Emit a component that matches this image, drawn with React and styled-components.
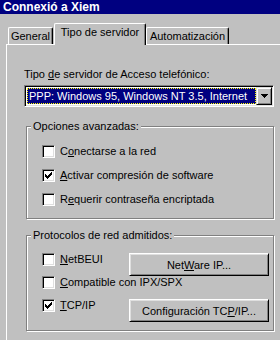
import React from 'react';
import styled, { createGlobalStyle } from 'styled-components';

const GlobalStyle = createGlobalStyle`
  html, body {
    margin: 0;
    padding: 0;
    background: #c0c0c0;
  }
  body {
    font-family: "Liberation Sans", Arial, sans-serif;
    font-size: 11px;
    color: #000;
  }
  * {
    box-sizing: border-box;
  }
`;

const Window = styled.div`
  width: 280px;
  height: 340px;
  overflow: hidden;
  background: #c0c0c0;
`;

const TitleBar = styled.div`
  height: 14px;
  padding-left: 3px;
  background: #000080;
  color: #fff;
  font-weight: bold;
  font-size: 12px;
  line-height: 14px;
  white-space: nowrap;
`;

const Body = styled.div`
  padding: 9px 0 0 6px;
`;

const TabStrip = styled.div`
  display: flex;
  align-items: flex-end;
  height: 21px;
  padding-left: 2px;
`;

const Tab = styled.div`
  position: relative;
  z-index: ${(p) => (p.$active ? 2 : 1)};
  width: ${(p) => p.$w}px;
  height: ${(p) => (p.$active ? 22 : 17)}px;
  margin-left: ${(p) => p.$ml || 0}px;
  margin-bottom: ${(p) => (p.$active ? -1 : 0)}px;
  padding-top: 2px;
  background: #c0c0c0;
  border-top: 1px solid #fff;
  border-left: 1px solid #fff;
  border-right: 1px solid #000;
  border-radius: 2px 2px 0 0;
  box-shadow: inset -1px 0 0 #808080;
  line-height: 13px;
  text-align: center;
  white-space: nowrap;
`;

const Panel = styled.div`
  width: 300px;
  height: 320px;
  padding: 23px 0 0 17px;
  border-top: 1px solid #fff;
  border-left: 1px solid #fff;
`;

const Content = styled.div`
  width: 250px;
`;

const Label = styled.div`
  line-height: 13px;
  margin-bottom: 4px;
  white-space: nowrap;
`;

const Key = styled.u`
  text-underline-offset: 1px;
`;

const Combo = styled.div`
  display: flex;
  height: 22px;
  padding: 2px;
  background: #fff;
  border: 1px solid;
  border-color: #808080 #fff #fff #808080;
  box-shadow: inset 1px 1px 0 #000, inset -1px -1px 0 #dfdfdf;
`;

const Selected = styled.div`
  flex: 1;
  min-width: 0;
  padding-left: 1px;
  background: #000080;
  color: #fff;
  border: 1px dotted #ffff00;
  line-height: 14px;
  white-space: nowrap;
  overflow: hidden;
`;

const ArrowButton = styled.div`
  flex: none;
  width: 16px;
  margin: -1px -1px -1px 0;
  display: flex;
  align-items: center;
  justify-content: center;
  background: #c0c0c0;
  border: 1px solid;
  border-color: #dfdfdf #000 #000 #dfdfdf;
  box-shadow: inset 1px 1px 0 #fff, inset -1px -1px 0 #808080;

  svg {
    display: block;
  }
`;

const Group = styled.fieldset`
  margin: ${(p) => p.$top}px 0 0 2px;
  padding: 0;
  min-width: 0;
  border: 1px solid #808080;
  box-shadow: inset 1px 1px 0 #fff, 1px 1px 0 #fff;
`;

const Legend = styled.legend`
  margin-left: 4px;
  padding: 0 2px;
  line-height: 13px;
  background: #c0c0c0;
`;

const Options = styled.div`
  display: flex;
  flex-direction: column;
  gap: 11px;
  padding: 12px 0 12px 15px;
`;

const ProtoGrid = styled.div`
  display: grid;
  grid-template-columns: 1fr 140px;
  grid-template-rows: 23px 23px 23px;
  padding: 11px 4px 8px 15px;
`;

const CheckRow = styled.label`
  display: flex;
  align-items: center;
  gap: 5px;
  height: ${(p) => (p.$fill ? 'auto' : '13px')};
  line-height: 13px;
  white-space: nowrap;
  grid-column: ${(p) => (p.$span ? '1 / -1' : 'auto')};
`;

const Box = styled.span`
  flex: none;
  width: 13px;
  height: 13px;
  padding: 2px;
  background: #fff;
  border: 1px solid;
  border-color: #808080 #fff #fff #808080;
  box-shadow: inset 1px 1px 0 #000, inset -1px -1px 0 #dfdfdf;

  svg {
    display: block;
  }
`;

const PushButton = styled.button`
  height: 23px;
  padding: 0;
  font: inherit;
  color: #000;
  background: #c0c0c0;
  border: 1px solid;
  border-color: #fff #000 #000 #fff;
  box-shadow: inset 1px 1px 0 #dfdfdf, inset -1px -1px 0 #808080;
  white-space: nowrap;
`;

// pixel check mark, as drawn by the classic checkbox
const CHECK = [
  '......#',
  '.....##',
  '#...###',
  '##.###.',
  '#####..',
  '.###...',
  '..#....',
];

const CheckMark = () => (
  <svg width="7" height="7" viewBox="0 0 7 7" shapeRendering="crispEdges">
    {CHECK.map((row, y) =>
      row.split('').map((c, x) =>
        c === '#' ? <rect key={`${x}-${y}`} x={x} y={y} width="1" height="1" fill="#000" /> : null
      )
    )}
  </svg>
);

const Checkbox = ({ checked, children, span }) => (
  <CheckRow $span={span}>
    <Box>{checked && <CheckMark />}</Box>
    <span>{children}</span>
  </CheckRow>
);

const App = () => (
  <>
    <GlobalStyle />
    <Window>
      <TitleBar>Connexió a Xiem</TitleBar>
      <Body>
        <TabStrip>
          <Tab $w={45}>General</Tab>
          <Tab $w={92} $ml={1} $active>Tipo de servidor</Tab>
          <Tab $w={83}>Automatización</Tab>
        </TabStrip>
        <Panel>
          <Content>
            <Label>
              Tipo <Key>d</Key>e servidor de Acceso telefónico:
            </Label>
            <Combo>
              <Selected>PPP: Windows 95, Windows NT 3.5, Internet</Selected>
              <ArrowButton>
                <svg width="7" height="4" viewBox="0 0 7 4" shapeRendering="crispEdges">
                  <path d="M0 0h7v1H0zM1 1h5v1H1zM2 2h3v1H2zM3 3h1v1H3z" fill="#000" />
                </svg>
              </ArrowButton>
            </Combo>

            <Group $top={13}>
              <Legend>Opciones avanzadas:</Legend>
              <Options>
                <Checkbox>
                  C<Key>o</Key>nectarse a la red
                </Checkbox>
                <Checkbox checked>
                  <Key>A</Key>ctivar compresión de software
                </Checkbox>
                <Checkbox>
                  R<Key>e</Key>querir contraseña encriptada
                </Checkbox>
              </Options>
            </Group>

            <Group $top={10}>
              <Legend>Protocolos de red admitidos:</Legend>
              <ProtoGrid>
                <Checkbox>
                  <Key>N</Key>etBEUI
                </Checkbox>
                <PushButton>
                  Net<Key>W</Key>are IP...
                </PushButton>
                <Checkbox span>
                  <Key>C</Key>ompatible con IPX/SPX
                </Checkbox>
                <Checkbox checked>
                  <Key>T</Key>CP/IP
                </Checkbox>
                <PushButton>
                  Configuración TC<Key>P</Key>/IP...
                </PushButton>
              </ProtoGrid>
            </Group>
          </Content>
        </Panel>
      </Body>
    </Window>
  </>
);

export default App;
